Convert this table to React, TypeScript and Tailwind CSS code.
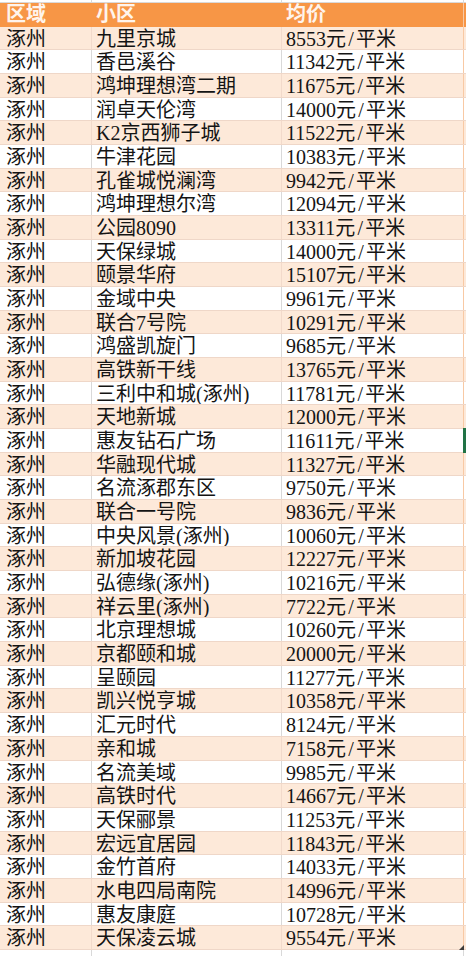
import React from 'react';

const data: [string, number][] = [
  ['九里京城', 8553],
  ['香邑溪谷', 11342],
  ['鸿坤理想湾二期', 11675],
  ['润卓天伦湾', 14000],
  ['K2京西狮子城', 11522],
  ['牛津花园', 10383],
  ['孔雀城悦澜湾', 9942],
  ['鸿坤理想尔湾', 12094],
  ['公园8090', 13311],
  ['天保绿城', 14000],
  ['颐景华府', 15107],
  ['金域中央', 9961],
  ['联合7号院', 10291],
  ['鸿盛凯旋门', 9685],
  ['高铁新干线', 13765],
  ['三利中和城(涿州)', 11781],
  ['天地新城', 12000],
  ['惠友钻石广场', 11611],
  ['华融现代城', 11327],
  ['名流涿郡东区', 9750],
  ['联合一号院', 9836],
  ['中央风景(涿州)', 10060],
  ['新加坡花园', 12227],
  ['弘德缘(涿州)', 10216],
  ['祥云里(涿州)', 7722],
  ['北京理想城', 10260],
  ['京都颐和城', 20000],
  ['呈颐园', 11277],
  ['凯兴悦亨城', 10358],
  ['汇元时代', 8124],
  ['亲和城', 7158],
  ['名流美域', 9985],
  ['高铁时代', 14667],
  ['天保郦景', 11253],
  ['宏远宜居园', 11843],
  ['金竹首府', 14033],
  ['水电四局南院', 14996],
  ['惠友康庭', 10728],
  ['天保凌云城', 9554],
];

function Price({ value }: { value: number }) {
  return (
    <>
      {value}元<span className="inline-block w-[10px] text-center">/</span>平米
    </>
  );
}

export default function App() {
  return (
    <div className="relative h-[956px] w-[466px] overflow-hidden bg-white font-['Liberation_Serif','Noto_Sans_CJK_SC',serif] text-[20px] text-[#141414]">
      {/* strip above the header */}
      <div className="grid h-[3px] grid-cols-[92px_190px_182px] border-b border-[#d9d9d9]">
        <div className="border-r border-[#d9d9d9]" />
        <div className="border-r border-[#d9d9d9]" />
        <div className="border-r border-[#d9d9d9]" />
      </div>

      {/* header */}
      <div className="grid h-[23.675px] grid-cols-[92px_190px_182px] bg-[#f79646] font-bold leading-[23.675px] text-[#fff4ec]">
        <div className="pl-[6px]">区域</div>
        <div className="pl-[4px]">小区</div>
        <div className="border-r border-[#f8c9a4] pl-[4px]">均价</div>
      </div>

      {data.map(([name, price], i) => {
        const band = i % 2 === 0;
        const line = band ? 'border-[#f2dacb]' : 'border-[#d9d9d9]';
        return (
          <div
            key={name}
            className={`grid h-[23.675px] grid-cols-[92px_190px_182px] border-b border-[#efd7c8] leading-[22.5px] ${
              band ? 'bg-[#fde9d9]' : 'bg-white'
            }`}
          >
            <div className={`overflow-hidden whitespace-nowrap border-r pl-[6px] pt-[1px] ${line}`}>涿州</div>
            <div className={`overflow-hidden whitespace-nowrap border-r pl-[4px] pt-[1px] ${line}`}>{name}</div>
            <div className="overflow-hidden whitespace-nowrap border-r border-[#f8c9a4] pl-[4px] pt-[1px]">
              <Price value={price} />
            </div>
          </div>
        );
      })}

      {/* empty strip below the table */}
      <div className="grid h-[8px] grid-cols-[92px_190px_182px]">
        <div className="border-r border-[#d9d9d9]" />
        <div className="border-r border-[#d9d9d9]" />
        <div className="border-r border-[#d9d9d9]" />
      </div>

      {/* table resize handle */}
      <svg className="absolute left-[459px] top-[945px]" width="5" height="5" viewBox="0 0 5 5">
        <path d="M5 0 L5 5 L0 5 Z" fill="#3c3c3c" />
      </svg>

      {/* green marker at the right edge */}
      <div className="absolute right-0 top-[428px] h-[25px] w-[3px] bg-[#217346]" />
    </div>
  );
}
